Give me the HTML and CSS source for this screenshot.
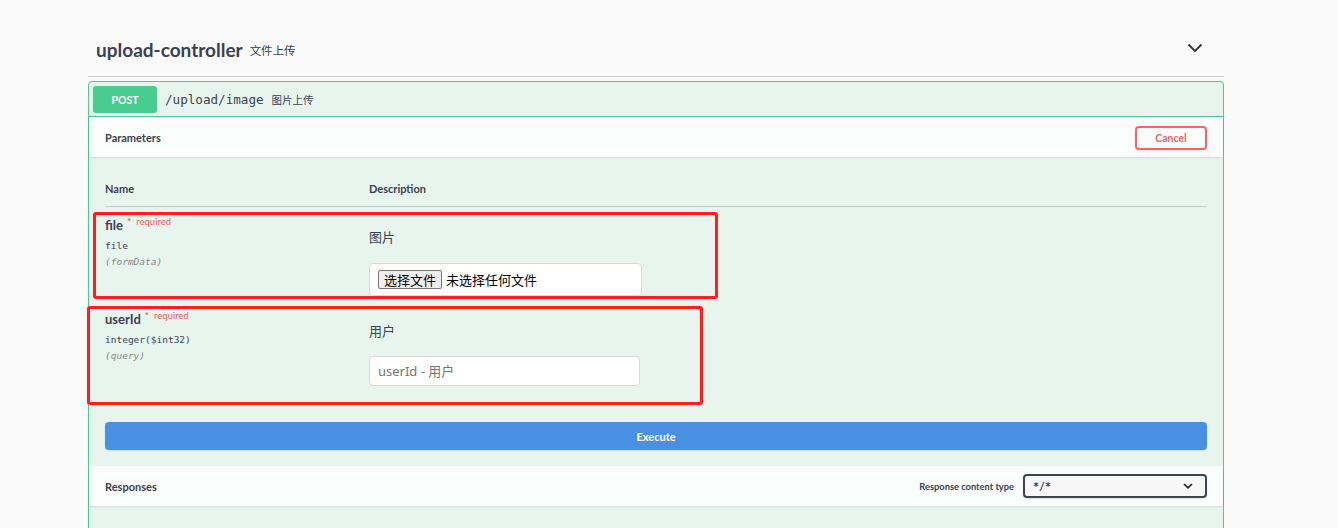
FILE: index.html
```html
<!DOCTYPE html>
<html lang="zh-CN">
<head>
<meta charset="utf-8">
<title>upload-controller</title>
<link rel="stylesheet" href="styles.css">
</head>
<body>
<div class="page">
  <section class="tag-section">
    <h3 class="tag-header">
      <span class="tag-title">upload-controller</span>
      <span class="tag-desc">文件上传</span>
      <svg class="tag-arrow" width="16" height="10" viewBox="0 0 16 10"><path d="M1.5 1.5 L8 8 L14.5 1.5" fill="none" stroke="#333" stroke-width="1.8"/></svg>
    </h3>
    <div class="opblock">
      <div class="summary">
        <span class="method">POST</span>
        <span class="path">/upload/image</span>
        <span class="summary-desc">图片上传</span>
      </div>
      <div class="section-header">
        <h4 class="section-title">Parameters</h4>
        <button class="btn-cancel">Cancel</button>
      </div>
      <div class="params">
        <div class="param-head">
          <div class="col-name">Name</div>
          <div class="col-desc">Description</div>
        </div>
        <div class="param-row">
          <div class="col-name">
            <div class="param-name">file<span class="req-star">*</span><span class="req-text">required</span></div>
            <div class="param-type">file</div>
            <div class="param-in">(formData)</div>
          </div>
          <div class="col-desc">
            <p class="param-desc">图片</p>
            <div class="file-input"><span class="file-btn">选择文件</span><span class="file-name">未选择任何文件</span></div>
          </div>
        </div>
        <div class="param-row">
          <div class="col-name">
            <div class="param-name">userId<span class="req-star">*</span><span class="req-text">required</span></div>
            <div class="param-type">integer($int32)</div>
            <div class="param-in">(query)</div>
          </div>
          <div class="col-desc">
            <p class="param-desc">用户</p>
            <input class="text-input" type="text" placeholder="userId - 用户">
          </div>
        </div>
      </div>
      <div class="execute-wrap">
        <button class="btn-execute">Execute</button>
      </div>
      <div class="section-header responses-header">
        <h4 class="section-title">Responses</h4>
        <div class="content-type">
          <span class="ct-label">Response content type</span>
          <div class="select"><span>*/*</span><svg width="10" height="6" viewBox="0 0 10 6"><path d="M1 1 L5 4.8 L9 1" fill="none" stroke="#222" stroke-width="1.7"/></svg></div>
        </div>
      </div>
      <div class="responses-body"></div>
    </div>
  </section>
  <div class="annot annot-1"></div>
  <div class="annot annot-2"></div>
</div>
</body>
</html>
```

FILE: styles.css
```css
html, body {
  margin: 0;
  padding: 0;
  background: #fafafa;
}
body {
  font-family: Lato, "Noto Sans", "Noto Sans CJK SC", sans-serif;
  color: #3b4151;
}
.page {
  position: relative;
  height: 528px;
  overflow: hidden;
}
.tag-section {
  margin-left: 88px;
  width: 1136px;
}
.tag-header {
  display: flex;
  align-items: center;
  margin: 0;
  padding: 38px 21px 14px 8px;
  height: 24px;
  border-bottom: 1px solid #c9cacd;
  font-weight: normal;
}
.tag-title {
  font-family: Lato, sans-serif;
  font-weight: 700;
  font-size: 19px;
  line-height: 24px;
  color: #3b4151;
}
.tag-desc {
  font-family: "Noto Sans CJK SC", sans-serif;
  font-size: 11.5px;
  margin-left: 7px;
  color: #3b4151;
}
.tag-arrow {
  margin-left: auto;
  margin-bottom: 4px;
}
.opblock {
  margin-top: 4px;
  border: 1px solid #49cc90;
  border-radius: 4px;
  background: #e8f5ef;
}
.summary {
  display: flex;
  align-items: center;
  height: 34px;
  padding: 0 4px;
  border-bottom: 1px solid #49cc90;
}
.method {
  display: flex;
  align-items: center;
  justify-content: center;
  width: 64px;
  height: 27px;
  margin-top: 1px;
  background: #49cc90;
  border-radius: 3px;
  color: #fff;
  font-weight: 700;
  font-size: 10.5px;
}
.path {
  margin-left: 8px;
  font-family: "DejaVu Sans Mono", monospace;
  font-size: 12.6px;
  color: #3b4151;
}
.summary-desc {
  margin-left: 8px;
  font-family: "Noto Sans CJK SC", sans-serif;
  font-size: 10.5px;
}
.section-header {
  display: flex;
  align-items: center;
  justify-content: space-between;
  height: 40px;
  padding: 0 16px;
  background: #fafdfc;
  box-shadow: 0 1px 2px rgba(0,0,0,.1);
}
.section-title {
  margin: 0;
  font-size: 11px;
  font-weight: 700;
  color: #3b4151;
}
.btn-cancel {
  width: 72px;
  height: 24px;
  margin-top: 1px;
  border: 2px solid #ff6060;
  border-radius: 4px;
  background: transparent;
  color: #ff6060;
  font-family: Lato, sans-serif;
  font-weight: 700;
  font-size: 10.5px;
  box-shadow: 0 1px 2px rgba(0,0,0,.1);
  padding: 0;
}
.params {
  padding: 25px 16px 0;
}
.param-head {
  display: flex;
  padding-bottom: 10px;
  border-bottom: 1px solid #c2cdc9;
  font-size: 11px;
  line-height: 14px;
  font-weight: 700;
}
.col-name {
  width: 264px;
  flex: none;
}
.col-desc {
  flex: 1;
}
.param-row {
  display: flex;
  padding: 10px 0 5px;
}
.param-row + .param-row {
  padding-bottom: 6px;
}
.param-name {
  font-size: 13px;
  font-weight: 700;
  line-height: 17px;
}
.req-star {
  position: relative;
  top: -5px;
  margin-left: 4px;
  font-size: 10px;
  color: #f76161;
}
.req-text {
  position: relative;
  top: -5px;
  margin-left: 5px;
  font-size: 9.5px;
  font-weight: 400;
  color: #f76161;
}
.param-type {
  margin-top: 3px;
  font-family: "DejaVu Sans Mono", monospace;
  font-size: 9.5px;
  line-height: 16px;
}
.param-in {
  font-family: "DejaVu Sans Mono", monospace;
  font-size: 9.5px;
  line-height: 16px;
  font-style: italic;
  color: #8a8a8a;
}
.param-desc {
  margin: 10px 0 0;
  font-family: "Noto Sans CJK SC", sans-serif;
  font-size: 13px;
  line-height: 20px;
}
.file-input {
  display: flex;
  align-items: center;
  box-sizing: border-box;
  width: 273px;
  height: 33px;
  margin-top: 16px;
  padding-left: 8px;
  background: #fff;
  border: 1px solid #d9d9d9;
  border-radius: 4px;
}
.file-btn {
  box-sizing: border-box;
  height: 19px;
  padding: 0 5px;
  border: 1px solid #767676;
  border-radius: 2px;
  background: #efefef;
  color: #000;
  font-family: "Noto Sans CJK SC", sans-serif;
  font-size: 13px;
  line-height: 17px;
}
.file-name {
  margin-left: 4px;
  color: #000;
  font-family: "Noto Sans CJK SC", sans-serif;
  font-size: 13px;
}
.text-input {
  display: block;
  box-sizing: border-box;
  width: 271px;
  height: 30px;
  margin-top: 15px;
  padding: 0 8px;
  background: #fff;
  border: 1px solid #d9d9d9;
  border-radius: 4px;
  font-family: "Noto Sans", "Noto Sans CJK SC", sans-serif;
  font-size: 13px;
  outline: none;
}
.text-input::placeholder {
  color: #757575;
}
.execute-wrap {
  padding: 30px 16px 16px;
}
.btn-execute {
  display: block;
  width: 100%;
  height: 28px;
  border: none;
  border-radius: 4px;
  background: #4990e2;
  color: #fff;
  font-family: Lato, sans-serif;
  font-weight: 700;
  font-size: 11px;
  box-shadow: 0 1px 2px rgba(0,0,0,.1);
}
.content-type {
  display: flex;
  align-items: center;
}
.ct-label {
  font-size: 9.3px;
  font-weight: 700;
  margin-right: 9px;
}
.select {
  display: flex;
  align-items: center;
  justify-content: space-between;
  box-sizing: border-box;
  width: 184px;
  height: 24px;
  padding: 0 12px 0 8px;
  border: 2px solid #41444e;
  border-radius: 4px;
  background: #f7f7f7;
  font-family: "DejaVu Sans Mono", monospace;
  font-weight: 700;
  font-size: 10px;
  box-shadow: 0 1px 2px rgba(0,0,0,.1);
}
.responses-body {
  height: 80px;
}
.annot {
  position: absolute;
  box-sizing: border-box;
  border: 3px solid #ff1f1a;
  border-radius: 3px;
}
.annot-1 {
  left: 93px;
  top: 212px;
  width: 625px;
  height: 87px;
}
.annot-2 {
  left: 87px;
  top: 306px;
  width: 616px;
  height: 99px;
}
```
